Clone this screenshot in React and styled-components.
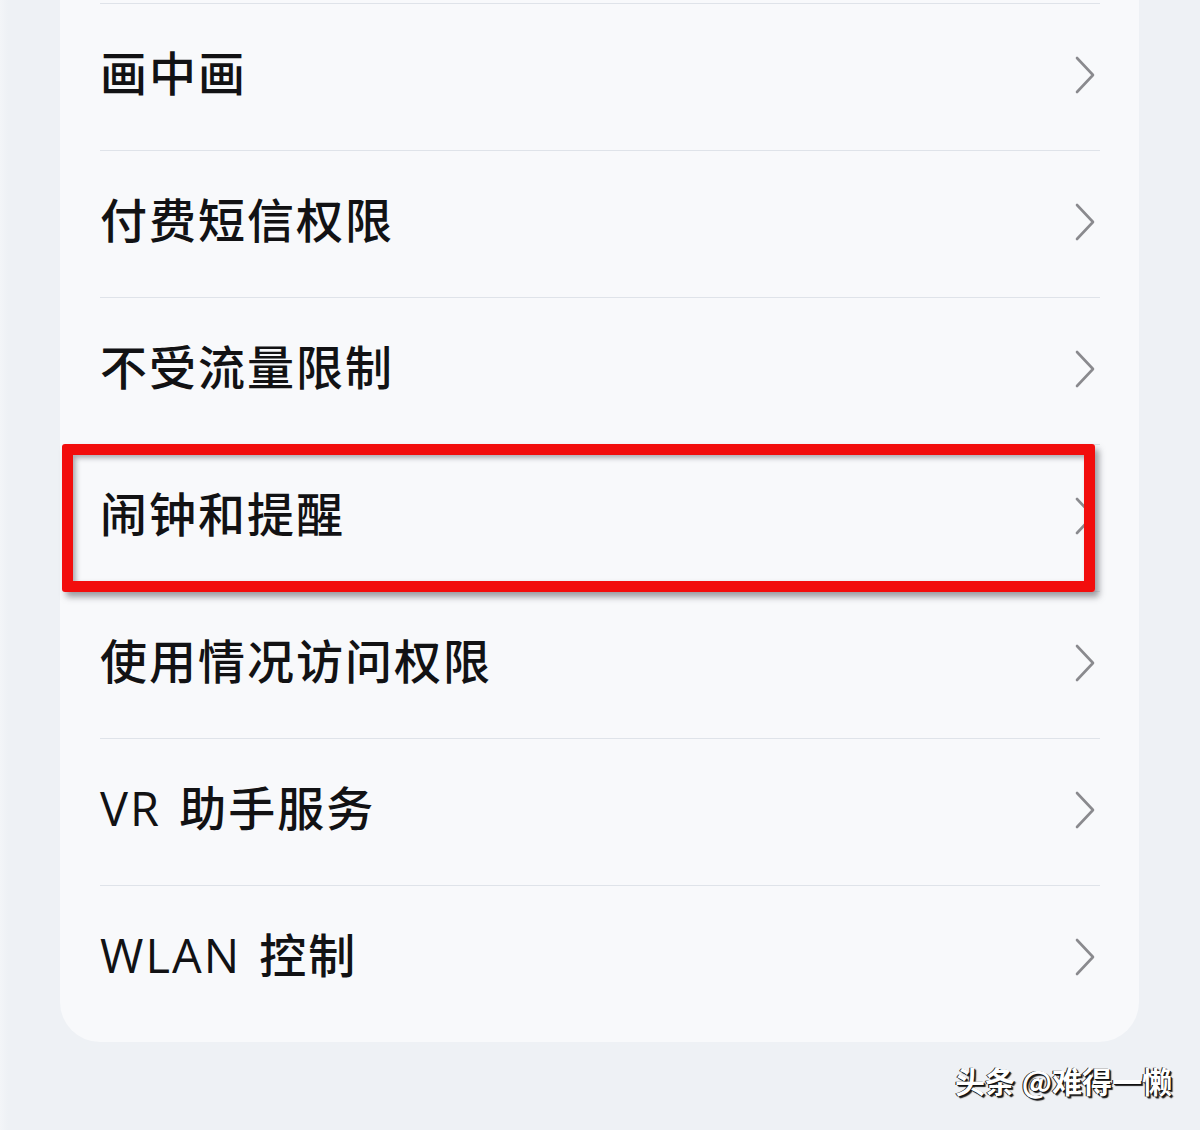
import React from "react";
import styled, { createGlobalStyle } from "styled-components";

const items = [
  "画中画",
  "付费短信权限",
  "不受流量限制",
  "闹钟和提醒",
  "使用情况访问权限",
  "VR 助手服务",
  "WLAN 控制",
];

const GlobalStyle = createGlobalStyle`
  html, body {
    margin: 0;
    padding: 0;
    background: #eef1f5;
  }
  body {
    font-family: "Noto Sans CJK SC", "Noto Sans", sans-serif;
  }
`;

const Page = styled.div`
  width: 1200px;
  height: 1130px;
  position: relative;
  overflow: hidden;
  background: linear-gradient(90deg, #f3f5f8 0, #eef1f5 8px, #eef1f5 100%);
`;

const Card = styled.div`
  margin-left: 60px;
  width: 1079px;
  background: #f8f9fb;
  border-radius: 0 0 40px 40px;
  padding: 3px 0 10px;
  position: relative;
`;

const Row = styled.div`
  height: 146px;
  margin: 0 39px 0 40px;
  border-top: 1.5px solid #dfe3e9;
  display: flex;
  align-items: center;
  justify-content: space-between;
`;

const Label = styled.span`
  font-family: "Open Sans", "Noto Sans CJK SC", sans-serif;
  font-size: 47px;
  color: #121214;
  letter-spacing: 2px;
  word-spacing: 4px;
  line-height: 1;
  font-weight: 500;
  margin-top: -7px;
`;

const Chevron = styled.svg`
  width: 22px;
  height: 40px;
  margin-right: 4px;
  margin-top: -4px;
`;

const Highlight = styled.div`
  position: absolute;
  left: 2px;
  top: 444px;
  width: 1011px;
  height: 126px;
  border: 11px solid #f20d0d;
  border-radius: 3px;
  box-shadow: 4px 5px 6px rgba(80, 80, 90, 0.55),
    inset 3px 3px 5px rgba(80, 80, 90, 0.45);
  pointer-events: none;
`;

const Watermark = styled.div`
  position: absolute;
  right: 28px;
  bottom: 28px;
  font-size: 30px;
  color: #ffffff;
  font-family: "Noto Sans CJK SC", sans-serif;
  font-weight: 700;
  letter-spacing: 0;
  text-shadow: 1px 1px 0 #111, -1px 0 0 #111, 2px 2px 1px #222;
`;

const ChevronIcon = () => (
  <Chevron viewBox="0 0 22 40">
    <path
      d="M3 3 L19 20 L3 37"
      fill="none"
      stroke="#8a8a8e"
      strokeWidth="2.6"
      strokeLinecap="round"
      strokeLinejoin="round"
    />
  </Chevron>
);

export default function App() {
  return (
    <>
      <GlobalStyle />
      <Page>
        <Card>
          {items.map((t) => (
            <Row key={t}>
              <Label>{t}</Label>
              <ChevronIcon />
            </Row>
          ))}
          <Highlight />
        </Card>
        <Watermark>头条 @难得一懒</Watermark>
      </Page>
    </>
  );
}
